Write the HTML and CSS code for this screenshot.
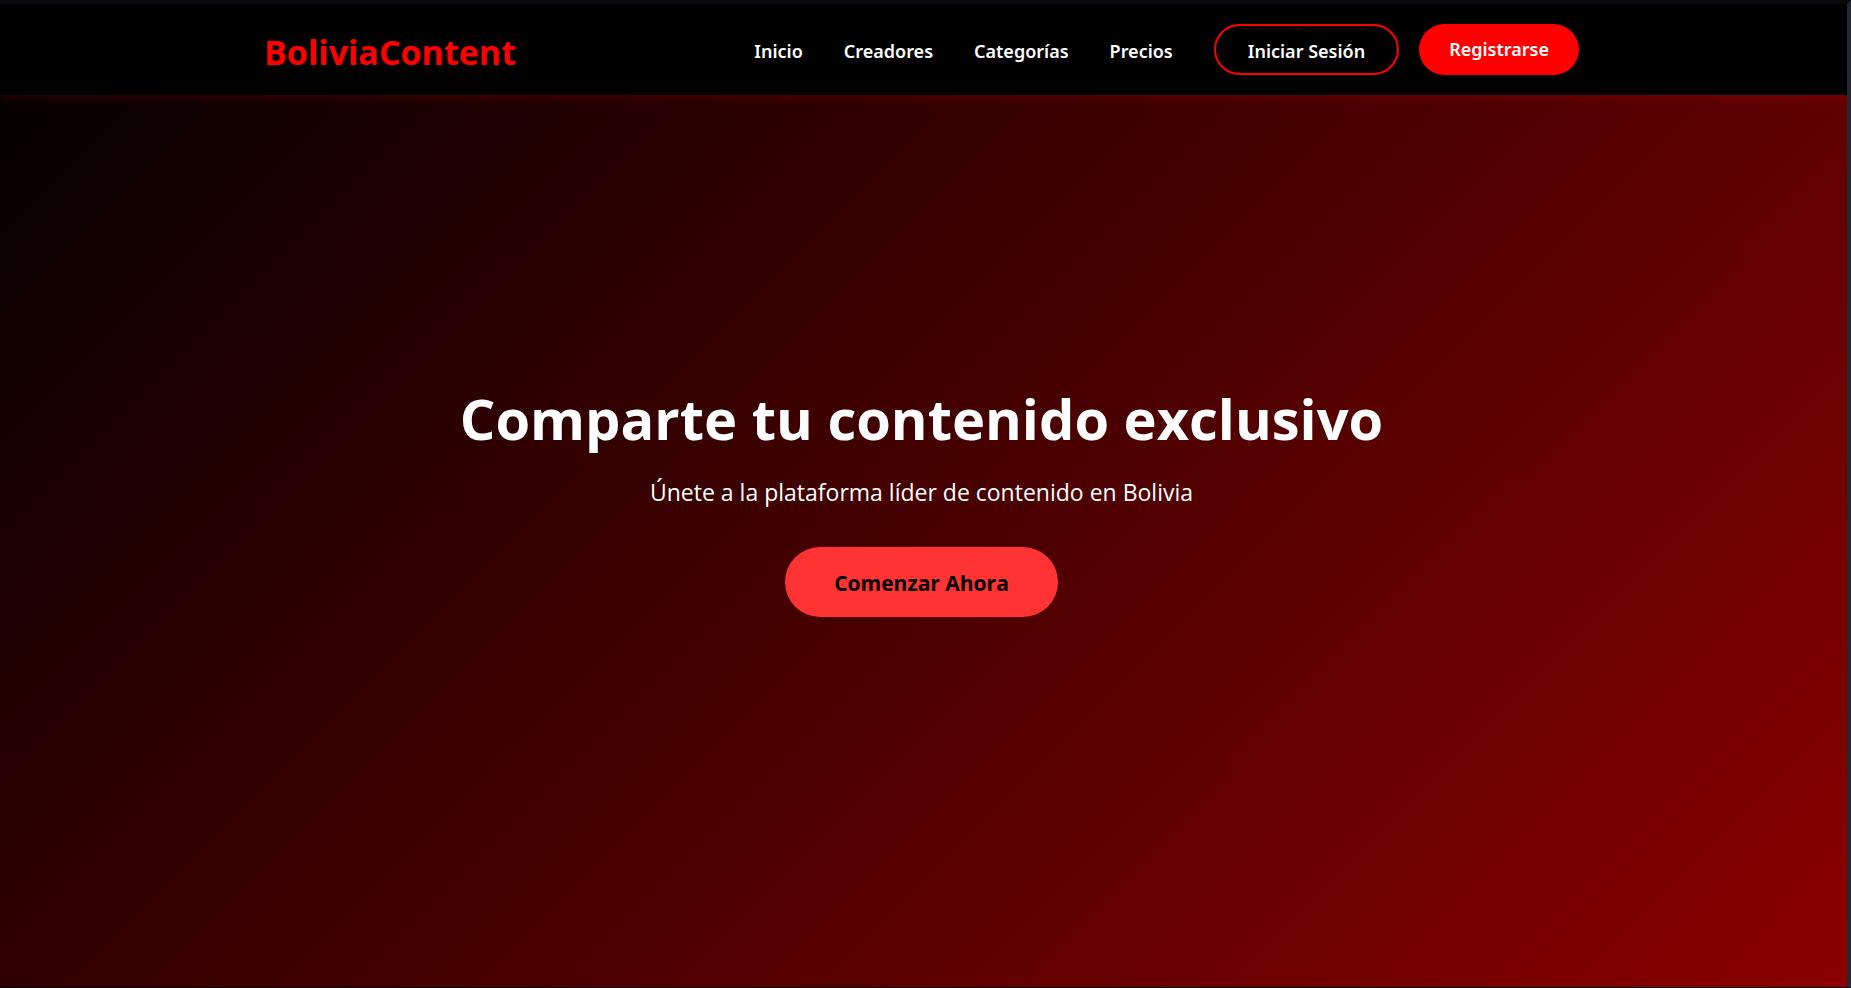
FILE: index.html
```html
<!DOCTYPE html>
<html lang="es">
<head>
<meta charset="utf-8">
<meta name="viewport" content="width=device-width, initial-scale=1">
<title>BoliviaContent</title>
<link rel="stylesheet" href="styles.css">
</head>
<body>
<div class="page">
  <header class="header">
    <div class="container">
      <a class="logo" href="#">BoliviaContent</a>
      <nav class="nav">
        <a class="nav-link" href="#">Inicio</a>
        <a class="nav-link" href="#">Creadores</a>
        <a class="nav-link" href="#">Categorías</a>
        <a class="nav-link" href="#">Precios</a>
        <div class="actions">
          <a class="btn btn-outline" href="#">Iniciar Sesión</a>
          <a class="btn btn-solid" href="#">Registrarse</a>
        </div>
      </nav>
    </div>
  </header>
  <main class="hero">
    <h1 class="hero-title">Comparte tu contenido exclusivo</h1>
    <p class="hero-text">Únete a la plataforma líder de contenido en Bolivia</p>
    <button class="cta" type="button">Comenzar Ahora</button>
  </main>
</div>
</body>
</html>
```
FILE: styles.css
```css
* {
  box-sizing: border-box;
  margin: 0;
  padding: 0;
}

body {
  min-height: 100vh;
  display: flex;
  border-top: 4px solid #08080c;
  border-right: 4px solid #252833;
  border-bottom: 1px solid #000;
  background: #000;
  color: #fff;
  font-family: "Segoe UI", "Open Sans", "Noto Sans", sans-serif;
}

.page {
  flex: 1;
  display: flex;
  flex-direction: column;
  background: linear-gradient(135deg, #000 0%, #8b0000 100%);
}

.header {
  padding: 20px 4px 20px 0;
  background: #000;
  box-shadow: 0 2px 10px rgba(255, 0, 0, 0.2);
}

.container {
  display: flex;
  align-items: center;
  justify-content: space-between;
  max-width: 1315px;
  margin: 0 auto;
}

.logo {
  padding-top: 5px;
  color: #f00;
  font-size: 34px;
  font-weight: 700;
  line-height: 46px;
  text-decoration: none;
}

.nav,
.actions {
  display: flex;
  align-items: center;
}

.nav {
  gap: 41px;
}

.actions {
  gap: 20px;
}

.nav-link,
.btn {
  color: #fff;
  font-family: "Segoe UI", "Noto Sans", "Open Sans", sans-serif;
  font-size: 18px;
  font-weight: 600;
  line-height: 27px;
  text-decoration: none;
}

.nav-link {
  padding-top: 3px;
}

.btn {
  border-radius: 31px;
}

.btn-outline {
  padding: 12px 32px 8px;
  border: 2px solid #f00;
}

.btn-solid {
  padding: 12px 30px;
  background: #f00;
}

.hero {
  flex: 1;
  display: flex;
  flex-direction: column;
  align-items: center;
  justify-content: center;
  padding: 0 4px 95px 0;
  text-align: center;
}

.hero-title {
  margin-bottom: 7px;
  font-size: 56px;
  font-weight: 700;
  line-height: 94px;
}

.hero-text {
  margin-bottom: 35px;
  font-size: 23px;
  line-height: 40px;
}

.cta {
  padding: 20px 49px 18px;
  border: 0;
  border-radius: 38px;
  background: #f33;
  color: #000;
  font: inherit;
  font-size: 21px;
  font-weight: 700;
  line-height: 32px;
}
```
